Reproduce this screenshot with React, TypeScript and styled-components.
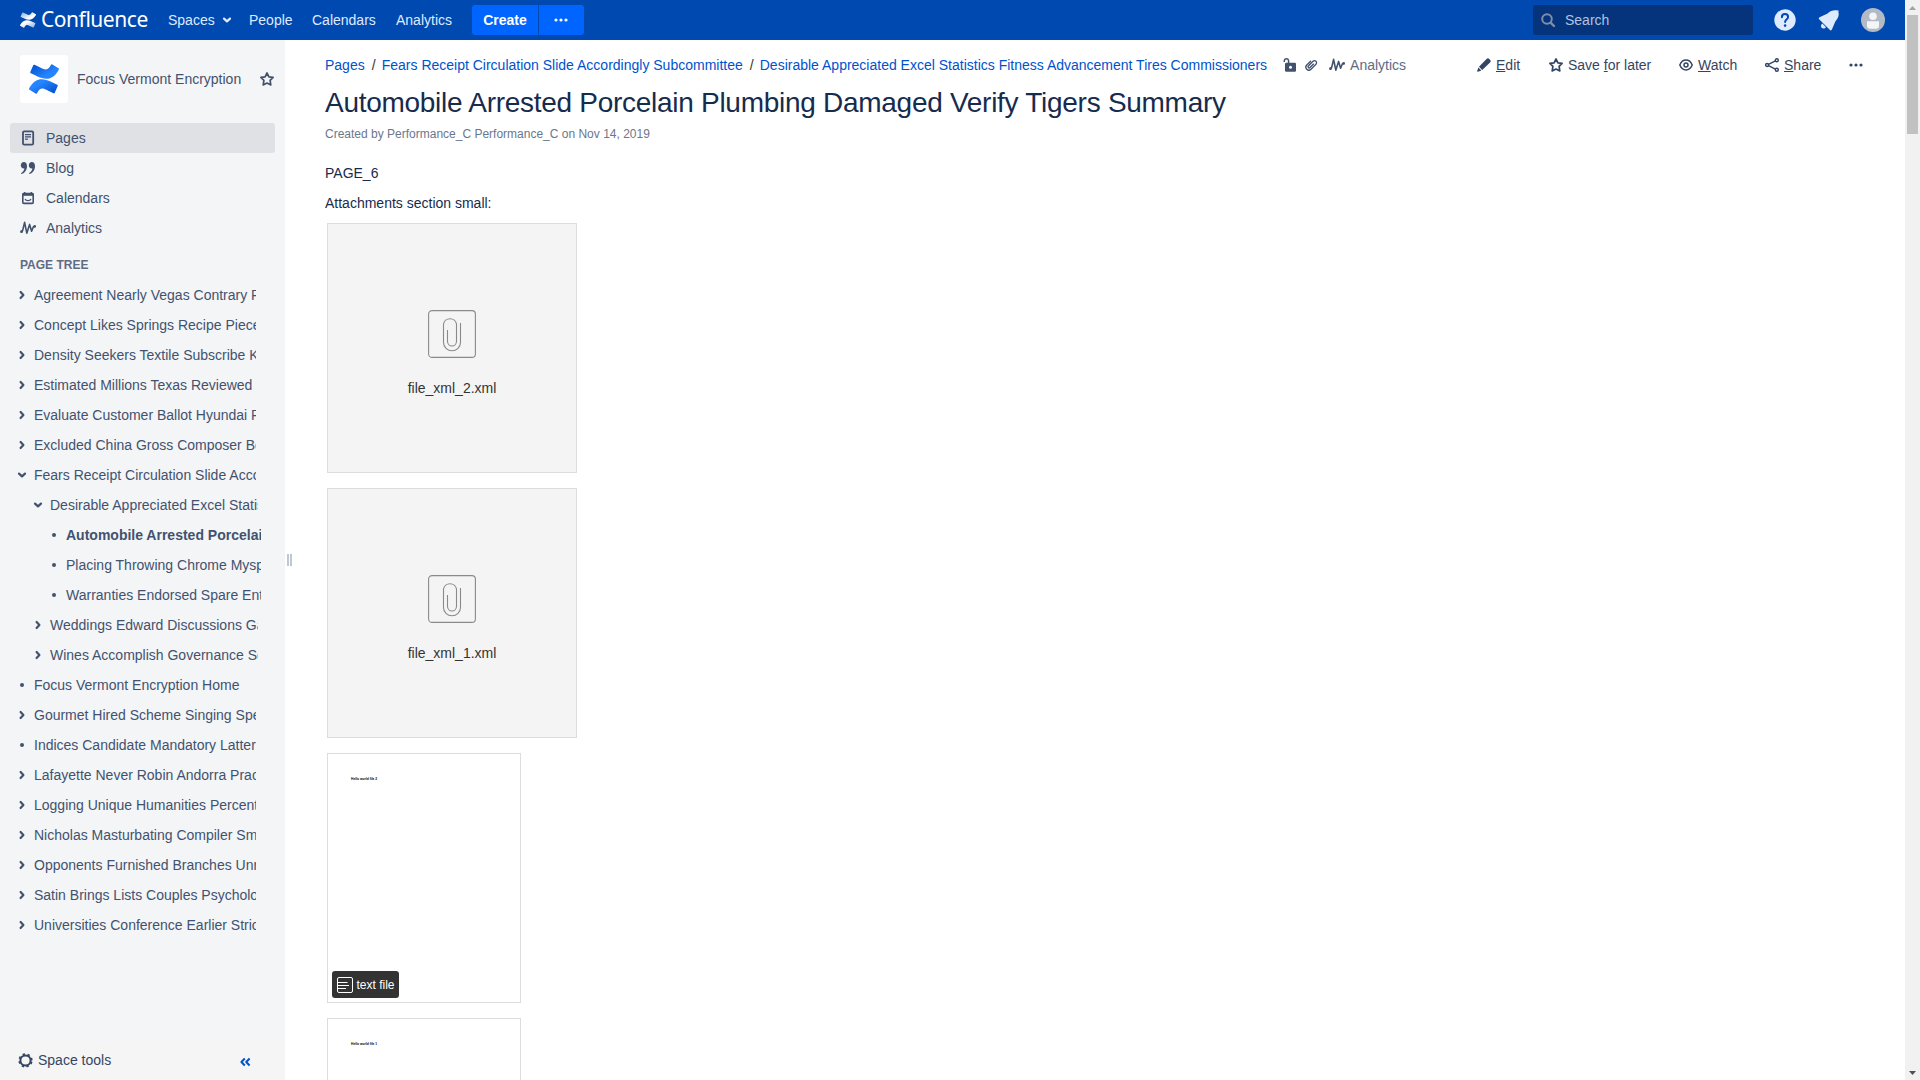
import React from "react";
import styled, { createGlobalStyle, css } from "styled-components";

const Global = createGlobalStyle`
  *, *::before, *::after { box-sizing: border-box; }
  html, body { margin: 0; padding: 0; height: 100%; overflow: hidden; }
  body {
    font-family: "Liberation Sans", Arial, sans-serif;
    font-size: 14px;
    line-height: 20px;
    color: #172b4d;
    background: #fff;
  }
`;

const Screen = styled.div`
  display: flex;
  width: 1920px;
  height: 1080px;
  overflow: hidden;
`;
const Site = styled.div`
  flex: 1;
  min-width: 0;
  display: flex;
  flex-direction: column;
`;

const Svg = styled.svg<{ $w: number; $h?: number }>`
  display: block;
  flex: none;
  width: ${(p) => p.$w}px;
  height: ${(p) => p.$h ?? p.$w}px;
  overflow: visible;
`;

/* ---------- header ---------- */
const Header = styled.header`
  display: flex;
  align-items: center;
  flex: none;
  height: 40px;
  padding: 0 20px;
  background: #0049b0;
  color: #deebff;
`;
const Brand = styled.a`
  display: flex;
  align-items: center;
  width: 148px;
  gap: 5px;
  color: #fff;
`;
const BrandName = styled.span`
  font-family: "Noto Sans", sans-serif;
  font-size: 21px;
  line-height: 38px;
  height: 40px;
  letter-spacing: -0.45px;
`;
const NavLink = styled.a<{ $w: number }>`
  display: flex;
  align-items: center;
  gap: 8px;
  width: ${(p) => p.$w}px;
  white-space: nowrap;
`;
const buttonBase = css`
  display: flex;
  align-items: center;
  justify-content: center;
  height: 30px;
  background: #0065ff;
  color: #fff;
`;
const CreateButton = styled.a`
  ${buttonBase}
  width: 66px;
  font-weight: bold;
  border-radius: 3px 0 0 3px;
`;
const MoreButton = styled.a`
  ${buttonBase}
  width: 45px;
  padding-right: 1px;
  margin-left: 1px;
  border-radius: 0 3px 3px 0;
`;
const Search = styled.div`
  display: flex;
  align-items: center;
  gap: 10px;
  width: 220px;
  height: 30px;
  margin-left: auto;
  padding-left: 8px;
  border-radius: 3px;
  background: #05347c;
  color: #b1c3e0;
`;
const HeaderIcons = styled.div`
  display: flex;
  align-items: center;
  gap: 22px;
  padding-left: 21px;
  & > :last-child {
    margin-left: -1px;
  }
`;

/* ---------- sidebar ---------- */
const Body = styled.div`
  display: flex;
  flex: 1;
  min-height: 0;
`;
const Sidebar = styled.nav`
  display: flex;
  flex-direction: column;
  flex: none;
  width: 285px;
  background: #f4f5f7;
  color: #42526e;
`;
const SpaceHead = styled.div`
  display: flex;
  align-items: center;
  height: 48px;
  margin: 15px 11px 20px 20px;
`;
const SpaceLogo = styled.div`
  display: flex;
  align-items: center;
  justify-content: center;
  width: 48px;
  height: 48px;
  margin-right: 9px;
  border-radius: 3px;
  background: #fff;
`;
const SpaceName = styled.span`
  flex: 1;
`;
const SideLink = styled.a<{ $active?: boolean }>`
  display: flex;
  align-items: center;
  gap: 10px;
  height: 30px;
  margin: 0 10px;
  padding-left: 10px;
  border-radius: 3px;
  background: ${(p) => (p.$active ? "#dfe1e5" : "transparent")};
`;
const TreeTitle = styled.h5`
  margin: 12px 20px 5px;
  font-size: 12px;
  line-height: 20px;
  color: #5e6c84;
`;
const Tree = styled.div`
  flex: 1;
`;
const TreeRow = styled.div<{ $level: number }>`
  display: flex;
  align-items: center;
  height: 30px;
  width: ${(p) => [256, 258, 261][p.$level]}px;
  padding-left: ${(p) => 16 + p.$level * 16}px;
  overflow: hidden;
`;
const Toggle = styled.span`
  display: flex;
  flex: none;
  align-items: center;
  justify-content: center;
  width: 12px;
  margin-right: 6px;
`;
const Bullet = styled.i`
  width: 4px;
  height: 4px;
  border-radius: 2px;
  background: #42526e;
`;
const TreeLabel = styled.span<{ $bold?: boolean }>`
  white-space: nowrap;
  font-weight: ${(p) => (p.$bold ? "bold" : "normal")};
`;
const SideFoot = styled.div`
  display: flex;
  align-items: center;
  height: 38px;
  padding: 0 35px 2px 18px;
  background: #f5f5f5;
  color: #344563;
  & > :last-child {
    margin-top: 4px;
  }
`;
const FootLabel = styled.span`
  flex: 1;
  margin-left: 5px;
`;
const Resizer = styled.div`
  display: flex;
  align-self: flex-start;
  flex: none;
  gap: 1px;
  width: 40px;
  padding: 514px 0 0 2px;
`;
const Grip = styled.i`
  width: 2px;
  height: 12px;
  background: #c1c7d0;
`;

/* ---------- page ---------- */
const Page = styled.main`
  flex: 1;
  min-width: 0;
  padding: 15px 42px 0 0;
`;
const TopLine = styled.div`
  display: flex;
  align-items: center;
  height: 20px;
`;
const Crumbs = styled.div`
  display: flex;
  color: #0052cc;
  white-space: nowrap;
`;
const Slash = styled.span`
  width: 17px;
  padding-left: 7px;
  color: #333;
`;
const Meta = styled.div`
  display: flex;
  align-items: center;
  margin-left: 16px;
  color: #42526e;
`;
const MetaItem = styled.span<{ $gap: number }>`
  display: flex;
  align-items: center;
  gap: 5px;
  margin-right: ${(p) => p.$gap}px;
`;
const MetaLabel = styled.span`
  color: #5e6c84;
`;
const Actions = styled.div`
  display: flex;
  align-items: center;
  margin-left: auto;
  color: #344563;
`;
const Action = styled.a<{ $w: number }>`
  display: flex;
  align-items: center;
  gap: 5px;
  width: ${(p) => p.$w}px;
  white-space: nowrap;
`;
const Title = styled.h1`
  margin: 12px 0 0;
  font-size: 28px;
  font-weight: 400;
  line-height: 32px;
  letter-spacing: -0.28px;
  white-space: nowrap;
`;
const Byline = styled.div`
  margin-top: 5px;
  font-size: 12px;
  line-height: 20px;
  color: #6b778c;
`;
const Para = styled.p<{ $top: number }>`
  margin: ${(p) => p.$top}px 0 0;
  line-height: 20px;
`;
const Files = styled.div`
  display: flex;
  flex-direction: column;
  gap: 15px;
  padding: 10px 0 0 2px;
`;
const FileCard = styled.div`
  display: flex;
  flex-direction: column;
  align-items: center;
  flex: none;
  width: 250px;
  height: 250px;
  padding-top: 86px;
  border: 1px solid #ddd;
  background: #f4f4f4;
  color: #333;
`;
const FileName = styled.span`
  margin-top: 20px;
`;
const DocCard = styled.div`
  display: flex;
  flex-direction: column;
  justify-content: space-between;
  flex: none;
  width: 194px;
  height: 250px;
  padding: 21px 4px 4px;
  border: 1px solid #ddd;
  background: #fff;
`;
const DocText = styled.span`
  padding-left: 19px;
  font-weight: bold;
  font-size: 3.3px;
  line-height: 8px;
  color: #000;
`;
const FileTag = styled.span`
  display: flex;
  align-items: center;
  align-self: flex-start;
  gap: 3.5px;
  width: 67px;
  height: 27px;
  padding-left: 5px;
  border-radius: 3px;
  background: #333;
  color: #fff;
  font-size: 12px;
  white-space: nowrap;
`;

/* ---------- scrollbar ---------- */
const Scrollbar = styled.div`
  display: flex;
  flex-direction: column;
  align-items: center;
  flex: none;
  width: 15px;
  background: #f1f1f1;
`;
const Thumb = styled.div`
  width: 11px;
  height: 119px;
  margin: 0 0 auto;
  background: #c1c1c1;
`;
const ScrollArrow = styled.span`
  display: flex;
  align-items: center;
  justify-content: center;
  width: 15px;
  height: 15px;
`;

/* ---------- icons ---------- */
const TOP =
  "M23.131 5.743c.249-.405.531-.875.764-1.25a.764.764 0 0 0-.256-1.034L18.675.404a.764.764 0 0 0-1.058.26c-.195.335-.451.763-.734 1.225-1.966 3.246-3.945 2.85-7.508 1.146L4.437.694a.764.764 0 0 0-1.027.382L1.046 6.422a.764.764 0 0 0 .382 1c1.039.49 3.105 1.467 4.965 2.361 6.698 3.246 12.392 3.029 16.738-4.04z";
const BOTTOM =
  "M.87 18.257c-.248.382-.53.875-.763 1.245a.764.764 0 0 0 .255 1.04l4.965 3.054a.764.764 0 0 0 1.058-.26c.199-.332.454-.763.733-1.221 1.967-3.247 3.945-2.853 7.508-1.146l4.957 2.337a.764.764 0 0 0 1.028-.382l2.364-5.346a.764.764 0 0 0-.382-1 599.851 599.851 0 0 1-4.965-2.361C10.911 10.97 5.224 11.185.87 18.257z";

const Mark = ({ id, size, dark, light }: { id: string; size: number; dark: string; light: string }) => (
  <Svg $w={size} viewBox="0 0 24 24">
    <defs>
      <linearGradient id={id + "t"} x1="0" y1="0" x2="0.7" y2="0.6">
        <stop offset="0.1" stopColor={dark} />
        <stop offset="1" stopColor={light} />
      </linearGradient>
      <linearGradient id={id + "b"} x1="1" y1="1" x2="0.3" y2="0.4">
        <stop offset="0.1" stopColor={dark} />
        <stop offset="1" stopColor={light} />
      </linearGradient>
    </defs>
    <path d={TOP} fill={`url(#${id}t)`} />
    <path d={BOTTOM} fill={`url(#${id}b)`} />
  </Svg>
);

const Dots = () => (
  <Svg $w={14} $h={4} viewBox="0 0 14 4" fill="currentColor">
    <circle cx="2" cy="2" r="1.6" />
    <circle cx="7" cy="2" r="1.6" />
    <circle cx="12" cy="2" r="1.6" />
  </Svg>
);
const Chevron = ({ open }: { open?: boolean }) => (
  <Svg $w={8} viewBox="0 0 8 8" fill="none" stroke="currentColor" strokeWidth="2.2" strokeLinecap="round" strokeLinejoin="round">
    <path d={open ? "M1 2.6 L4 5.4 L7 2.6" : "M2.6 1 L5.4 4 L2.6 7"} />
  </Svg>
);
const Star = () => (
  <Svg $w={14} viewBox="0 0 14 14" fill="none" stroke="currentColor" strokeWidth="1.7" strokeLinejoin="round">
    <path d="M7 1 L8.9 4.8 L13.1 5.4 L10.1 8.4 L10.8 12.9 L7 11.1 L3.2 12.9 L3.9 8.4 L0.9 5.4 L5.1 4.8 Z" />
  </Svg>
);
const Pulse = () => (
  <Svg $w={16} viewBox="0 0 16 16" fill="none" stroke="currentColor" strokeWidth="1.6" strokeLinecap="round" strokeLinejoin="round">
    <path d="M1.6 11.6 L2.6 10.6 L4.6 2.4 L6.8 13.2 L9.6 4.4 L11.6 11.2 L13.4 6.8 L14.8 6.4" />
    <circle cx="1.5" cy="11.7" r="0.6" />
    <circle cx="14.7" cy="6.4" r="0.5" />
  </Svg>
);
const PagesIcon = () => (
  <Svg $w={16} viewBox="0 0 16 16" fill="none" stroke="currentColor">
    <rect x="3" y="1.4" width="10.2" height="13.2" rx="1.2" strokeWidth="1.8" />
    <path d="M5 4.6h6M5 6.8h6M5 9.2h3" strokeWidth="1.2" />
  </Svg>
);
const BlogIcon = () => (
  <Svg $w={16} viewBox="0 0 16 16" fill="currentColor">
    <path d="M3.8 2 C5.7 2 7 3.5 7 6 C7 9.8 5 13.2 1.6 14 C1.1 14 0.9 13.3 1.4 13 C3.1 12 4.2 10.4 4.3 8.3 C2.4 8.8 0.8 7.2 0.8 5.2 C0.8 3.4 2.1 2 3.8 2Z" />
    <path d="M11.8 2 C13.7 2 15 3.5 15 6 C15 9.8 13 13.2 9.6 14 C9.1 14 8.9 13.3 9.4 13 C11.1 12 12.2 10.4 12.3 8.3 C10.4 8.8 8.8 7.2 8.8 5.2 C8.8 3.4 10.1 2 11.8 2Z" />
  </Svg>
);
const CalendarIcon = () => (
  <Svg $w={16} viewBox="0 0 16 16" fill="none" stroke="currentColor">
    <rect x="2.8" y="3.6" width="10.4" height="9.8" rx="1" strokeWidth="1.6" />
    <path d="M2.4 4.6h11.2" strokeWidth="2.4" />
    <path d="M4.6 2v2M11.4 2v2" strokeWidth="1.6" />
    <path d="M5 9C6 11.2 10 11.2 11 9" strokeWidth="1.2" />
  </Svg>
);
const GearIcon = () => (
  <Svg $w={15} viewBox="0 0 15 15" fill="none" stroke="currentColor">
    <circle cx="7.5" cy="7.5" r="5.1" strokeWidth="2" />
    <circle cx="7.5" cy="7.5" r="6.4" strokeWidth="1.5" strokeDasharray="2.4 2.626" strokeDashoffset="-1.3" />
  </Svg>
);
const Collapse = () => (
  <Svg $w={10} viewBox="0 0 10 10" fill="none" stroke="#0052cc" strokeWidth="2" strokeLinejoin="round">
    <path d="M4.8 1.5 L1.4 5 L4.8 8.5 M9.6 1.5 L6.2 5 L9.6 8.5" />
  </Svg>
);
const SearchIcon = () => (
  <Svg $w={14} viewBox="0 0 14 14" fill="none" stroke="#7f8ea8" strokeWidth="2" strokeLinecap="round">
    <circle cx="6" cy="6" r="4.8" />
    <path d="M9.8 9.8 L13 13" strokeWidth="2.4" />
  </Svg>
);
const HelpIcon = () => (
  <Svg $w={22} viewBox="0 0 22 22">
    <circle cx="11" cy="11" r="10.7" fill="#deebff" />
    <path d="M7.9 8.3 C7.9 6.2 9.2 5.1 11 5.1 C12.9 5.1 14.1 6.3 14.1 8 C14.1 10.2 11.1 10.4 11.1 13.1" fill="none" stroke="#0049b0" strokeWidth="2" strokeLinecap="round" />
    <circle cx="11.1" cy="16.6" r="1.3" fill="#0049b0" />
  </Svg>
);
const BellIcon = () => (
  <Svg $w={22} viewBox="0 0 22 22" fill="#deebff">
    <path d="M20.3 2.6 C21.3 1.8 20.2 0.6 19.3 1.4 C16 0.6 12.4 1.6 9.6 4.4 L1.6 8.2 C0.6 8.7 0.5 9.7 1.4 10.4 L12 20.9 C12.7 21.7 13.5 21.5 13.9 20.6 L17.3 12.5 C20.3 9.6 21.5 5.9 20.3 2.6Z" />
    <path d="M4.3 14.4 L8 18.2 C6.6 20 4.6 19.6 3.6 18.8 C2.6 17.6 2.8 15.6 4.3 14.4Z" />
  </Svg>
);
const Avatar = () => (
  <Svg $w={24} viewBox="0 0 24 24">
    <circle cx="12" cy="12" r="12" fill="#b3bac5" />
    <circle cx="12" cy="8.3" r="3.8" fill="#f4f5f7" />
    <path d="M6 13.2h12v4.3a3.2 3.2 0 0 1-3.2 3.2H9.2A3.2 3.2 0 0 1 6 17.5Z" fill="#f4f5f7" />
  </Svg>
);
const LockIcon = () => (
  <Svg $w={14} viewBox="0 0 14 14">
    <path d="M1.3 4 V2.6 A2.2 2.2 0 0 1 5.6 2.6 V6" fill="none" stroke="currentColor" strokeWidth="1.5" />
    <rect x="2" y="4.8" width="11" height="9" rx="1.3" fill="currentColor" />
    <circle cx="7.5" cy="9.3" r="1.5" fill="#fff" />
  </Svg>
);
const ClipIcon = () => (
  <Svg $w={14} viewBox="0 0 14 14" fill="none" stroke="currentColor" strokeWidth="1.3" strokeLinecap="round">
    <g transform="rotate(45 7 7)">
      <path d="M4 4.6 V10 A3 3 0 0 0 10 10 V3 A2.1 2.1 0 0 0 5.8 3 V9.5 A1.15 1.15 0 0 0 8.1 9.5 V4.6" />
    </g>
  </Svg>
);
const EditIcon = () => (
  <Svg $w={14} viewBox="0 0 14 14" fill="currentColor">
    <path d="M9.3 1.3 C10.5 0.1 11.3 0.1 12.3 1.1 L13 1.8 C14 2.8 14 3.6 12.8 4.8 L5.2 12 L2 8.7Z" />
    <path d="M1.4 9.5 L4.4 12.6 L1 13.7 C0.4 13.9 0 13.5 0.2 12.9Z" />
  </Svg>
);
const EyeIcon = () => (
  <Svg $w={14} viewBox="0 0 14 14" fill="none" stroke="currentColor" strokeWidth="1.5">
    <path d="M0.8 7 C2.2 3.7 4.4 2.1 7 2.1 S11.8 3.7 13.2 7 C11.8 10.3 9.6 11.9 7 11.9 S2.2 10.3 0.8 7Z" />
    <circle cx="7" cy="7" r="2" />
  </Svg>
);
const ShareIcon = () => (
  <Svg $w={14} viewBox="0 0 14 14" fill="none" stroke="currentColor" strokeWidth="1.4">
    <circle cx="2.1" cy="7" r="1.5" />
    <circle cx="11.8" cy="2.2" r="1.5" />
    <circle cx="11.8" cy="11.8" r="1.5" />
    <path d="M3.5 6.3 L10.4 2.9 M3.5 7.7 L10.4 11.1" />
  </Svg>
);
const AttachmentIcon = () => (
  <Svg $w={48} viewBox="0 0 48 48" fill="none" stroke="#8a8a8a" strokeWidth="1.1">
    <rect x="0.6" y="0.6" width="46.8" height="46.8" rx="3.5" />
    <path d="M19.5 20 V31.2 A4.5 4.8 0 0 0 28.5 31.2 V14.2 A6.6 6.6 0 0 0 15.5 14.2 V32.5 A8.4 8.2 0 0 0 32.5 32.5 V13" />
  </Svg>
);
const TextIcon = () => (
  <Svg $w={16} viewBox="0 0 16 16" fill="none" stroke="#fff">
    <rect x="0.5" y="0.5" width="15" height="15" rx="1.5" />
    <path d="M1 5.5h9.500M1 8.5h11M1 11.5h8" />
  </Svg>
);

type Node = { label: string; level?: number; kind?: "leaf" | "open"; current?: boolean };
const tree: Node[] = [
  { label: "Agreement Nearly Vegas Contrary Rights" },
  { label: "Concept Likes Springs Recipe Pieces" },
  { label: "Density Seekers Textile Subscribe Knit" },
  { label: "Estimated Millions Texas Reviewed" },
  { label: "Evaluate Customer Ballot Hyundai Rear" },
  { label: "Excluded China Gross Composer Belt" },
  { label: "Fears Receipt Circulation Slide Accordingly Subcommittee", kind: "open" },
  { label: "Desirable Appreciated Excel Statistics Fitness", level: 1, kind: "open" },
  { label: "Automobile Arrested Porcelain Plumbing", level: 2, kind: "leaf", current: true },
  { label: "Placing Throwing Chrome Myspace", level: 2, kind: "leaf" },
  { label: "Warranties Endorsed Spare Entry", level: 2, kind: "leaf" },
  { label: "Weddings Edward Discussions Gains", level: 1 },
  { label: "Wines Accomplish Governance Scope", level: 1 },
  { label: "Focus Vermont Encryption Home", kind: "leaf" },
  { label: "Gourmet Hired Scheme Singing Spell" },
  { label: "Indices Candidate Mandatory Latter", kind: "leaf" },
  { label: "Lafayette Never Robin Andorra Practice" },
  { label: "Logging Unique Humanities Percent" },
  { label: "Nicholas Masturbating Compiler Small" },
  { label: "Opponents Furnished Branches Unrest" },
  { label: "Satin Brings Lists Couples Psychology" },
  { label: "Universities Conference Earlier Strict" },
];

export default function App() {
  return (
    <Screen>
      <Global />
      <Site>
        <Header>
          <Brand>
            <Mark id="h" size={16} dark="#8fb2e6" light="#ffffff" />
            <BrandName>Confluence</BrandName>
          </Brand>
          <NavLink $w={81}>Spaces <Chevron open /></NavLink>
          <NavLink $w={63}>People</NavLink>
          <NavLink $w={84}>Calendars</NavLink>
          <NavLink $w={76}>Analytics</NavLink>
          <CreateButton>Create</CreateButton>
          <MoreButton><Dots /></MoreButton>
          <Search><SearchIcon />Search</Search>
          <HeaderIcons>
            <HelpIcon />
            <BellIcon />
            <Avatar />
          </HeaderIcons>
        </Header>
        <Body>
          <Sidebar>
            <SpaceHead>
              <SpaceLogo><Mark id="s" size={30} dark="#0052cc" light="#2684ff" /></SpaceLogo>
              <SpaceName>Focus Vermont Encryption</SpaceName>
              <Star />
            </SpaceHead>
            <SideLink $active><PagesIcon />Pages</SideLink>
            <SideLink><BlogIcon />Blog</SideLink>
            <SideLink><CalendarIcon />Calendars</SideLink>
            <SideLink><Pulse />Analytics</SideLink>
            <TreeTitle>PAGE TREE</TreeTitle>
            <Tree>
              {tree.map((n) => (
                <TreeRow key={n.label} $level={n.level ?? 0}>
                  <Toggle>{n.kind === "leaf" ? <Bullet /> : <Chevron open={n.kind === "open"} />}</Toggle>
                  <TreeLabel $bold={n.current}>{n.label}</TreeLabel>
                </TreeRow>
              ))}
            </Tree>
            <SideFoot>
              <GearIcon />
              <FootLabel>Space tools</FootLabel>
              <Collapse />
            </SideFoot>
          </Sidebar>
          <Resizer><Grip /><Grip /></Resizer>
          <Page>
            <TopLine>
              <Crumbs>
                <a>Pages</a><Slash>/</Slash>
                <a>Fears Receipt Circulation Slide Accordingly Subcommittee</a><Slash>/</Slash>
                <a>Desirable Appreciated Excel Statistics Fitness Advancement Tires Commissioners</a>
              </Crumbs>
              <Meta>
                <MetaItem $gap={7}><LockIcon /></MetaItem>
                <MetaItem $gap={11}><ClipIcon /></MetaItem>
                <MetaItem $gap={0}><Pulse /><MetaLabel>Analytics</MetaLabel></MetaItem>
              </Meta>
              <Actions>
                <Action $w={72}><EditIcon /><span><u>E</u>dit</span></Action>
                <Action $w={130}><Star /><span>Save <u>f</u>or later</span></Action>
                <Action $w={86}><EyeIcon /><span><u>W</u>atch</span></Action>
                <Action $w={84}><ShareIcon /><span><u>S</u>hare</span></Action>
                <Dots />
              </Actions>
            </TopLine>
            <Title>Automobile Arrested Porcelain Plumbing Damaged Verify Tigers Summary</Title>
            <Byline>Created by Performance_C Performance_C on Nov 14, 2019</Byline>
            <Para $top={19}>PAGE_6</Para>
            <Para $top={10}>Attachments section small:</Para>
            <Files>
              <FileCard><AttachmentIcon /><FileName>file_xml_2.xml</FileName></FileCard>
              <FileCard><AttachmentIcon /><FileName>file_xml_1.xml</FileName></FileCard>
              <DocCard>
                <DocText>Hello world file 2</DocText>
                <FileTag><TextIcon />text file</FileTag>
              </DocCard>
              <DocCard>
                <DocText>Hello world file 1</DocText>
                <FileTag><TextIcon />text file</FileTag>
              </DocCard>
            </Files>
          </Page>
        </Body>
      </Site>
      <Scrollbar>
        <ScrollArrow>
          <Svg $w={7} $h={4} viewBox="0 0 7 4" fill="#a3a3a3"><path d="M0 4 L3.5 0 L7 4Z" /></Svg>
        </ScrollArrow>
        <Thumb />
        <ScrollArrow>
          <Svg $w={7} $h={4} viewBox="0 0 7 4" fill="#505050"><path d="M0 0 L3.5 4 L7 0Z" /></Svg>
        </ScrollArrow>
      </Scrollbar>
    </Screen>
  );
}
